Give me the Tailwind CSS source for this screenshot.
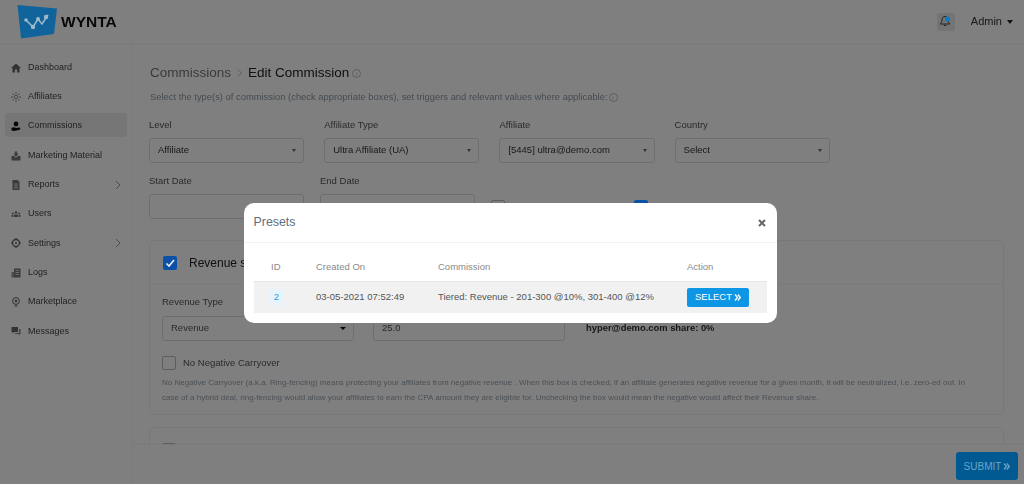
<!doctype html>
<html lang="en">

<head>
    <meta charset="UTF-8">
    <meta name="viewport" content="width=device-width, initial-scale=1.0">
    <script src="https://cdn.jsdelivr.net/npm/@tailwindcss/browser@4"></script>
    <title>Edit Commission - Wynta</title>
</head>

<body class="bg-white font-['Liberation_Sans',Arial,sans-serif]">
    <div class="relative w-[1024px] h-[484px] overflow-hidden blur-[0.3px]">
        <!-- Header -->
        <header class="h-[44px] flex items-center justify-between border-b border-[#f4f4f4] pl-[17px] pr-[11px]">
            <div class="flex items-center gap-[3px]">
                <svg class="relative z-20" width="41" height="34" viewBox="0 0 41 34">
                    <polygon points="0.5,0 40,3.500 37,29 4,33.500" fill="#11649b" />
                    <path d="M9 15 L16 22 L21 14 L25 19 L31 10" fill="none" stroke="#9fb9cb" stroke-width="1.500" />
                    <circle cx="9" cy="15" r="1.800" fill="#9fb9cb" />
                    <circle cx="16" cy="22" r="2.200" fill="#9fb9cb" />
                    <circle cx="21" cy="14" r="2" fill="#9fb9cb" />
                    <circle cx="29" cy="12" r="2.200" fill="#9fb9cb" />
                </svg>
                <span class="text-[15.500px] font-bold text-[#111]">WYNTA</span>
            </div>
            <div class="flex items-center">
                <div class="w-[18px] h-[18px] rounded-[3px] bg-[#e9e9e9] flex items-center justify-center mr-[16px]">
                    <svg class="relative z-20" width="13" height="13" viewBox="0 0 13 13">
                        <path d="M6 1.500c-2 0-3 1.500-3 3.500 0 2-1 3-1.800 4h9.600c-.8-1-1.800-2-1.800-4 0-2-1-3.500-3-3.500z" fill="none" stroke="#222" stroke-width="1" />
                        <path d="M4.800 10.500h2.400" stroke="#222" stroke-width="1" />
                        <circle cx="8.500" cy="4" r="2.500" fill="#0e7ac2" />
                    </svg>
                </div>
                <span class="text-[11px] text-[#333]">Admin</span>
                <span class="ml-[5px] w-0 h-0 border-x-[3.500px] border-x-transparent border-t-[4px] border-t-[#222]"></span>
            </div>
        </header>

        <div class="flex h-[440px]">
            <!-- Sidebar -->
            <aside class="w-[133px] shrink-0 border-r border-[#f4f4f4] pt-[8px] px-[5px] text-[9px] text-[#444]">
                <ul class="flex flex-col">
                    <li class="h-[29.300px] pt-[2px] flex items-center pl-[6px] gap-[7px]">
                        <svg class="w-[10px] h-[10px]" viewBox="0 0 10 10"><path d="M5 .5 L10 5 H8.500 V9.500 H6 V6.500 H4 V9.500 H1.500 V5 H0 Z" fill="#666" /></svg>
                        <span>Dashboard</span>
                    </li>
                    <li class="h-[29.300px] pt-[2px] flex items-center pl-[6px] gap-[7px]">
                        <svg class="w-[10px] h-[10px]" viewBox="0 0 10 10"><circle cx="5" cy="5" r="1.800" fill="none" stroke="#777" stroke-width=".8" /><path d="M5 0v2M5 8v2M0 5h2M8 5h2M1.500 1.500l1.400 1.400M7.100 7.100l1.400 1.400M1.500 8.500l1.400-1.400M7.100 2.900l1.400-1.400" stroke="#777" stroke-width=".8" /></svg>
                        <span>Affiliates</span>
                    </li>
                    <li class="h-[24px] pt-[2px] my-[2.650px] flex items-center pl-[6px] gap-[7px] rounded-[4px] bg-[#ececec]">
                        <svg class="w-[10px] h-[10px]" viewBox="0 0 10 10"><circle cx="5" cy="3" r="2.400" fill="#111" /><path d="M.5 9.500 V7 C2 6 3.500 6 5 7 L8 6.500 C9.800 6.500 9.800 8.500 8 9 L3 10 Z" fill="#111" /></svg>
                        <span>Commissions</span>
                    </li>
                    <li class="h-[29.300px] pt-[2px] flex items-center pl-[6px] gap-[7px]">
                        <svg class="w-[10px] h-[10px]" viewBox="0 0 10 10"><path d="M3.800 .5h2.400v2.500h1.300L5 5.800 2.500 3h1.300z M.5 5h2.500l2 1.800L7 5h2.500v4.500h-9z" fill="#777" /></svg>
                        <span>Marketing Material</span>
                    </li>
                    <li class="h-[29.300px] pt-[2px] flex items-center pl-[6px] gap-[7px]">
                        <svg class="w-[10px] h-[10px]" viewBox="0 0 10 10"><path d="M1.500 0h5l2 2v8h-7z" fill="#777" /><path d="M3 4h4M3 6h4M3 8h4" stroke="#fff" stroke-width=".7" /></svg>
                        <span class="flex-1">Reports</span>
                        <svg class="w-[6px] h-[10px] mr-[6px]" viewBox="0 0 6 10"><path d="M1 1l4 4-4 4" fill="none" stroke="#999" stroke-width="1" /></svg>
                    </li>
                    <li class="h-[29.300px] pt-[2px] flex items-center pl-[6px] gap-[7px]">
                        <svg class="w-[10px] h-[10px]" viewBox="0 0 10 10"><circle cx="5" cy="3.500" r="1.300" fill="#777" /><circle cx="1.800" cy="4.500" r="1" fill="#777" /><circle cx="8.200" cy="4.500" r="1" fill="#777" /><path d="M3 8V5.500h4V8zM.5 8V6h1.800v2zM7.700 8V6h1.800v2z" fill="#777" /></svg>
                        <span>Users</span>
                    </li>
                    <li class="h-[29.300px] pt-[2px] flex items-center pl-[6px] gap-[7px]">
                        <svg class="w-[10px] h-[10px]" viewBox="0 0 10 10"><circle cx="5" cy="5" r="3.500" fill="none" stroke="#666" stroke-width="1.300" /><circle cx="5" cy="5" r="1" fill="#666" /><path d="M5 0v1.500M5 8.500V10M0 5h1.500M8.500 5H10" stroke="#666" stroke-width="1.200" /></svg>
                        <span class="flex-1">Settings</span>
                        <svg class="w-[6px] h-[10px] mr-[6px]" viewBox="0 0 6 10"><path d="M1 1l4 4-4 4" fill="none" stroke="#999" stroke-width="1" /></svg>
                    </li>
                    <li class="h-[29.300px] pt-[2px] flex items-center pl-[6px] gap-[7px]">
                        <svg class="w-[10px] h-[10px]" viewBox="0 0 10 10"><path d="M3 .5h6.500v9H3z" fill="#777" /><path d="M.5 4H3v5.500H.5z" fill="#999" /><path d="M4.500 2.500h3.500M4.500 4.500h3.500M4.500 6.500h3.500" stroke="#fff" stroke-width=".7" /></svg>
                        <span>Logs</span>
                    </li>
                    <li class="h-[29.300px] pt-[2px] flex items-center pl-[6px] gap-[7px]">
                        <svg class="w-[10px] h-[10px]" viewBox="0 0 10 10"><circle cx="5" cy="4" r="3.400" fill="none" stroke="#666" stroke-width="1" /><circle cx="5" cy="4" r="1.300" fill="#666" /><path d="M3 8.500h4L5 10z" fill="#666" /></svg>
                        <span>Marketplace</span>
                    </li>
                    <li class="h-[29.300px] pt-[2px] flex items-center pl-[6px] gap-[7px]">
                        <svg class="w-[10px] h-[10px]" viewBox="0 0 10 10"><path d="M.5 1h6.500v5H3L1.500 7.500V6h-1z" fill="#666" /><path d="M8 3h1.500v5h-1v1.500L7 8H4V7h4z" fill="#888" /></svg>
                        <span>Messages</span>
                    </li>
                </ul>
            </aside>

            <!-- Main -->
            <main class="flex-1 flex flex-col min-w-0">
                <div class="h-[400px] overflow-hidden pl-[16px] pr-[20px] pt-[21px]">
                    <div class="flex items-center pl-[1px] text-[13.500px] leading-[16px]">
                        <span class="text-[#777]">Commissions</span>
                        <svg class="w-[6px] h-[8px] mx-[5.500px]" viewBox="0 0 6 8"><path d="M1 .5l3.500 3.500L1 7.500" fill="none" stroke="#aaa" stroke-width=".8" /></svg>
                        <span class="text-[#222]">Edit Commission</span>
                        <span class="ml-[3px] w-[9px] h-[9px] rounded-full border border-[#bbb] text-[6px] leading-[8px] text-center text-[#aaa]">i</span>
                    </div>
                    <p class="mt-[10px] pl-[1px] flex items-center text-[9.400px] leading-[12px] text-[#8b97a3]">
                        Select the type(s) of commission (check appropriate boxes), set triggers and relevant values where applicable:
                        <span class="ml-[1px] w-[9px] h-[9px] rounded-full border border-[#bbb] text-[6px] leading-[8px] text-center text-[#aaa]">i</span>
                    </p>

                    <!-- Filters -->
                    <div class="mt-[16px] grid grid-cols-[155.200px_155.200px_155.200px_155.200px] gap-x-[20px]">
                        <div>
                            <label class="block text-[9.500px] leading-[12px] text-[#555]">Level</label>
                            <div class="mt-[7px] h-[25px] flex items-center justify-between border border-[#ddd] rounded-[3px] pl-[8px] pr-[7px] text-[9.500px] text-[#333]">
                                Affiliate
                                <span class="w-0 h-0 border-x-[2.500px] border-x-transparent border-t-[3px] border-t-[#666]"></span>
                            </div>
                        </div>
                        <div>
                            <label class="block text-[9.500px] leading-[12px] text-[#555]">Affiliate Type</label>
                            <div class="mt-[7px] h-[25px] flex items-center justify-between border border-[#ddd] rounded-[3px] pl-[8px] pr-[7px] text-[9.500px] text-[#333]">
                                Ultra Affiliate (UA)
                                <span class="w-0 h-0 border-x-[2.500px] border-x-transparent border-t-[3px] border-t-[#666]"></span>
                            </div>
                        </div>
                        <div>
                            <label class="block text-[9.500px] leading-[12px] text-[#555]">Affiliate</label>
                            <div class="mt-[7px] h-[25px] flex items-center justify-between border border-[#ddd] rounded-[3px] pl-[8px] pr-[7px] text-[9.500px] text-[#333]">
                                [5445] ultra@demo.com
                                <span class="w-0 h-0 border-x-[2.500px] border-x-transparent border-t-[3px] border-t-[#666]"></span>
                            </div>
                        </div>
                        <div>
                            <label class="block text-[9.500px] leading-[12px] text-[#555]">Country</label>
                            <div class="mt-[7px] h-[25px] flex items-center justify-between border border-[#ddd] rounded-[3px] pl-[8px] pr-[7px] text-[9.500px] text-[#333]">
                                Select
                                <span class="w-0 h-0 border-x-[2.500px] border-x-transparent border-t-[3px] border-t-[#666]"></span>
                            </div>
                        </div>
                    </div>

                    <div class="mt-[12px] flex">
                        <div class="w-[155px]">
                            <label class="block text-[9.500px] leading-[12px] text-[#555]">Start Date</label>
                            <div class="mt-[7px] h-[25px] border border-[#ddd] rounded-[3px]"></div>
                        </div>
                        <div class="w-[155px] ml-[16px]">
                            <label class="block text-[9.500px] leading-[12px] text-[#555]">End Date</label>
                            <div class="mt-[7px] h-[25px] border border-[#ddd] rounded-[3px]"></div>
                        </div>
                        <div class="ml-[16px] mt-[25px] w-[14px] h-[14px] border border-[#bbb] rounded-[2px]"></div>
                        <div class="relative z-20 ml-[129px] mt-[25px] w-[14px] h-[14px] bg-[#0c50a8] rounded-[2px]"></div>
                    </div>

                    <!-- Revenue share card -->
                    <section class="mt-[21px] h-[175px] border border-[#f0f0f0] rounded-[6px]">
                        <div class="h-[44px] flex items-center border-b border-[#f4f4f4] pl-[13px] gap-[12px]">
                            <span class="relative z-20 w-[14px] h-[14px] rounded-[2px] bg-[#0c50a8] flex items-center justify-center">
                                <svg class="w-[10px] h-[10px]" viewBox="0 0 10 10"><path d="M1.500 5.500l2.500 2.500 5-6" fill="none" stroke="#eee" stroke-width="1.600" /></svg>
                            </span>
                            <span class="text-[12px] text-[#222]">Revenue share</span>
                        </div>
                        <div class="pl-[12px] pt-[11px] pr-[12px]">
                            <div class="flex items-end">
                                <div class="w-[192px]">
                                    <label class="block text-[9.500px] leading-[12px] text-[#555]">Revenue Type</label>
                                    <div class="mt-[8px] h-[25px] flex items-center justify-between border border-[#ddd] rounded-[3px] pl-[8px] pr-[7px] text-[9.500px] text-[#555]">
                                        Revenue
                                        <span class="w-0 h-0 border-x-[3px] border-x-transparent border-t-[3.500px] border-t-[#111]"></span>
                                    </div>
                                </div>
                                <div class="ml-[19px] w-[192px] h-[25px] flex items-center border border-[#ddd] rounded-[3px] pl-[8px] text-[9.500px] text-[#555]">25.0</div>
                                <div class="ml-[21px] h-[25px] flex items-center text-[9.400px] font-bold text-[#333]">hyper@demo.com share: 0%</div>
                            </div>
                            <div class="mt-[15px] flex items-center gap-[7px]">
                                <span class="w-[14px] h-[14px] border border-[#bbb] rounded-[2px]"></span>
                                <span class="text-[9.500px] text-[#555]">No Negative Carryover</span>
                            </div>
                            <p class="mt-[5px] max-w-[815px] text-[8px] leading-[15px] text-[#98a2ac]">No Negative Carryover (a.k.a. Ring-fencing) means protecting your affiliates from negative revenue . When this box is checked, if an affiliate generates negative revenue for a given month, it will be neutralized, i.e. zero-ed out. In case of a hybrid deal, ring-fencing would allow your affiliates to earn the CPA amount they are eligible for. Unchecking the box would mean the negative would affect their Revenue share.</p>
                        </div>
                    </section>

                    <!-- Next card, cut off by the footer -->
                    <section class="mt-[12px] h-[60px] border border-[#f0f0f0] rounded-[6px] pl-[12px] pt-[15px]">
                        <span class="block w-[14px] h-[14px] border border-[#bbb] rounded-[2px]"></span>
                    </section>
                </div>

                <!-- Footer -->
                <footer class="h-[40px] bg-white border-t border-[#f4f4f4] flex justify-end items-start pt-[7px] pr-[6px]">
                    <button class="relative z-20 w-[62px] h-[28px] rounded-[3px] bg-[#005a91] text-[#6aa3c8] text-[10px] flex items-center justify-center gap-[2px]">
                        SUBMIT
                        <svg class="w-[7px] h-[7px]" viewBox="0 0 7 7"><path d="M1 .5l2.500 3L1 6.500M3.800 .5l2.500 3-2.500 3" fill="none" stroke="#6aa3c8" stroke-width="1.300" /></svg>
                    </button>
                </footer>
            </main>
        </div>

        <!-- Backdrop -->
        <div class="absolute inset-0 z-10 bg-black/50"></div>

        <!-- Presets modal -->
        <div class="absolute z-30 left-[243.500px] top-[203px] w-[533px] h-[120px] bg-white rounded-[10px]">
            <div class="h-[40px] flex items-center justify-between border-b border-[#f2f2f2] pl-[10px] pr-[11px]">
                <h5 class="text-[12.400px] text-[#5f6f7e]">Presets</h5>
                <svg class="w-[8px] h-[8px]" viewBox="0 0 8 8"><path d="M1 1l6 6M7 1l-6 6" stroke="#666" stroke-width="2" /></svg>
            </div>
            <table class="ml-[10.500px] w-[513px] table-fixed text-[9.500px]">
                <thead>
                    <tr class="h-[38px] text-[#8a8a8a] text-left">
                        <th class="w-[62px] pl-[17px] pt-[10px] font-normal">ID</th>
                        <th class="w-[122px] pt-[10px] font-normal">Created On</th>
                        <th class="w-[249px] pt-[10px] font-normal">Commission</th>
                        <th class="pt-[10px] font-normal">Action</th>
                    </tr>
                </thead>
                <tbody>
                    <tr class="h-[32px] bg-[#f1f1f1] border-t border-[#e6e6e6] text-[#555]">
                        <td class="pl-[16px]"><span class="inline-block w-[13px] h-[16px] leading-[16px] text-center rounded-[2px] bg-[#e8f4fd] text-[#2a9df4]">2</span></td>
                        <td>03-05-2021 07:52:49</td>
                        <td>Tiered: Revenue - 201-300 @10%, 301-400 @12%</td>
                        <td>
                            <button class="w-[62px] h-[19px] rounded-[2px] bg-[#0d96e6] text-white text-[9.500px] flex items-center justify-center gap-[2px]">
                                SELECT
                                <svg class="w-[7px] h-[7px]" viewBox="0 0 7 7"><path d="M1 .5l2.500 3L1 6.500M3.800 .5l2.500 3-2.500 3" fill="none" stroke="#fff" stroke-width="1.300" /></svg>
                            </button>
                        </td>
                    </tr>
                </tbody>
            </table>
        </div>
    </div>
</body>

</html>
